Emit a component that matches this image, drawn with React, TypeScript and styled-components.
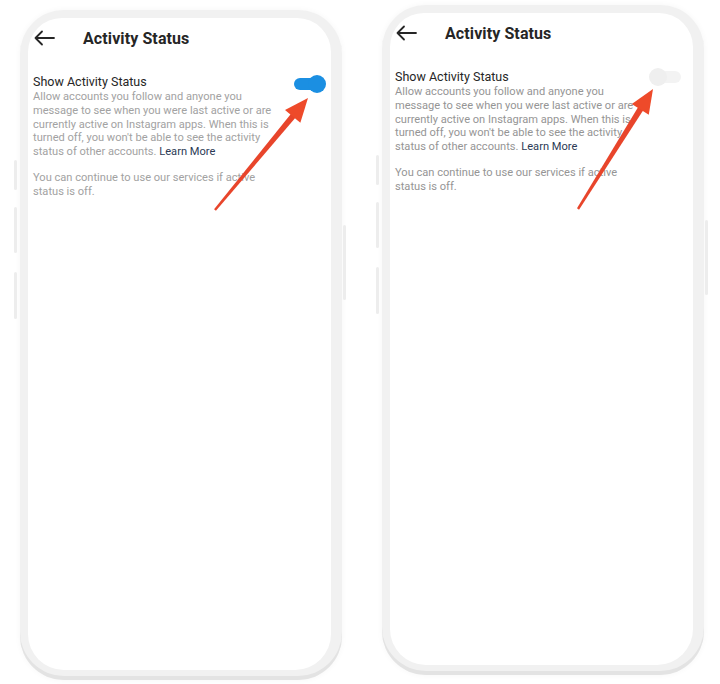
import React from 'react';
import styled, { createGlobalStyle } from 'styled-components';

const GlobalStyle = createGlobalStyle`
  html, body {
    margin: 0;
    padding: 0;
    background: #ffffff;
    font-family: Roboto, 'Liberation Sans', Arial, sans-serif;
  }
`;

interface IPhoneProps {
  on: boolean;
  //arrow points in phone coordinates: tail -> tip
  tail: [number, number];
  tip: [number, number];
}

//red annotation arrow drawn over the screen
const Arrow: React.FC<{ tail: [number, number]; tip: [number, number] }> = ({ tail, tip }) => {
  const dx = tip[0] - tail[0];
  const dy = tip[1] - tail[1];
  const len = Math.sqrt(dx * dx + dy * dy);
  const ux = dx / len;
  const uy = dy / len;
  const px = -uy;
  const py = ux;
  const headLen = 24;
  const half = 10;
  const bx = tip[0] - ux * headLen;
  const by = tip[1] - uy * headLen;
  const shaft = [
    [tail[0] + px * 1.2, tail[1] + py * 1.2],
    [tail[0] - px * 1.2, tail[1] - py * 1.2],
    [bx + ux * 2 - px * 3, by + uy * 2 - py * 3],
    [bx + ux * 2 + px * 3, by + uy * 2 + py * 3],
  ]
    .map((p) => p.join(','))
    .join(' ');
  const head = [
    [tip[0], tip[1]],
    [bx + px * half, by + py * half],
    [bx - px * half, by - py * half],
  ]
    .map((p) => p.join(','))
    .join(' ');
  return (
    <ArrowSvg width='340' height='690' viewBox='0 0 340 690'>
      <polygon points={shaft} fill='#e8452b' />
      <polygon points={head} fill='#ee4a2a' />
    </ArrowSvg>
  );
};

const Phone: React.FC<IPhoneProps> = ({ on, tail, tip }) => {
  return (
    <PhoneFrame>
      <SideButton side='left' top={150} height={30} />
      <SideButton side='left' top={197} height={46} />
      <SideButton side='left' top={262} height={47} />
      <SideButton side='right' top={215} height={75} />
      <Screen>
        <Header>
          <BackIcon width='22' height='16' viewBox='0 0 22 16'>
            <path
              d='M21 8H2.5M9 1.5L2.5 8L9 14.5'
              fill='none'
              stroke='#262626'
              strokeWidth='1.8'
              strokeLinecap='round'
              strokeLinejoin='round'
            />
          </BackIcon>
          <Title>Activity Status</Title>
        </Header>
        <SettingRow>
          <SettingText>
            <SettingLabel>Show Activity Status</SettingLabel>
            <Description on={on}>
              Allow accounts you follow and anyone you
              <br />
              message to see when you were last active or are
              <br />
              currently active on Instagram apps. When this is
              <br />
              turned off, you won't be able to see the activity
              <br />
              status of other accounts. <LearnMore>Learn More</LearnMore>
            </Description>
          </SettingText>
          <Toggle on={on}>
            <Knob on={on} />
          </Toggle>
        </SettingRow>
        <Description on={on}>
          You can continue to use our services if active
          <br />
          status is off.
        </Description>
      </Screen>
      <Arrow tail={tail} tip={tip} />
    </PhoneFrame>
  );
};

const App: React.FC = () => {
  return (
    <>
      <GlobalStyle />
      <Page>
        <PhoneSlot offset={10}>
          <Phone on={true} tail={[195, 200]} tip={[288, 88]} />
        </PhoneSlot>
        <PhoneSlot offset={5}>
          <Phone on={false} tail={[196, 204]} tip={[271, 84]} />
        </PhoneSlot>
      </Page>
    </>
  );
};

export default App;

const Page = styled.div`
  display: flex;
  align-items: flex-start;
  gap: 40px;
  padding-left: 20px;
  width: 720px;
  height: 684px;
  box-sizing: border-box;
  overflow: hidden;
`;

const PhoneSlot = styled.div<{ offset: number }>`
  padding-top: ${(p) => p.offset}px;
`;

const PhoneFrame = styled.div`
  position: relative;
  width: 322px;
  height: 670px;
  box-sizing: border-box;
  border-radius: 44px;
  background: #f1f1f1;
  padding: 8px 11px 10px 8px;
  box-shadow: 0 0 6px rgba(0, 0, 0, 0.04), inset 0 -4px 0 #e3e3e3;
`;

const SideButton = styled.div<{ side: 'left' | 'right'; top: number; height: number }>`
  position: absolute;
  ${(p) => (p.side === 'left' ? 'left: -6px;' : 'right: -4px;')}
  top: ${(p) => p.top}px;
  width: 3px;
  height: ${(p) => p.height}px;
  border-radius: 2px;
  background: #ededed;
`;

const Screen = styled.div`
  height: 100%;
  box-sizing: border-box;
  background: #ffffff;
  border-radius: 34px 34px 36px 36px;
  padding: 10px 0 0 5px;
`;

const Header = styled.div`
  display: flex;
  align-items: center;
  gap: 28px;
  height: 18px;
  padding-top: 1px;
`;

const BackIcon = styled.svg`
  flex: none;
`;

const Title = styled.h1`
  margin: 0;
  font-size: 16px;
  font-weight: 700;
  color: #262626;
  letter-spacing: 0.1px;
`;

const SettingRow = styled.div`
  display: flex;
  align-items: flex-start;
  justify-content: space-between;
  margin-top: 27px;
`;

const SettingText = styled.div`
  display: flex;
  flex-direction: column;
`;

const SettingLabel = styled.div`
  font-size: 12.5px;
  color: #262626;
  line-height: 16px;
`;

const Description = styled.p<{ on: boolean }>`
  margin: 0 0 12px;
  font-size: 11.1px;
  line-height: 13.8px;
  color: ${(p) => (p.on ? '#a2a2a2' : '#959595')};
  white-space: nowrap;
`;

const LearnMore = styled.span`
  color: #2b3a55;
`;

const Toggle = styled.div<{ on: boolean }>`
  position: relative;
  flex: none;
  width: 30px;
  height: 12px;
  margin-top: ${(p) => (p.on ? '4px' : '2px')};
  margin-right: ${(p) => (p.on ? '7px' : '12px')};
  border-radius: 6px;
  background: ${(p) => (p.on ? '#1b8fe2' : '#f3f3f3')};
`;

const Knob = styled.div<{ on: boolean }>`
  position: absolute;
  top: -3px;
  ${(p) => (p.on ? 'right: -2px;' : 'left: -2px;')}
  width: 18px;
  height: 18px;
  border-radius: 50%;
  background: ${(p) => (p.on ? '#1b8fe2' : '#efefef')};
`;

const ArrowSvg = styled.svg`
  position: absolute;
  left: 0;
  top: 0;
  pointer-events: none;
`;
